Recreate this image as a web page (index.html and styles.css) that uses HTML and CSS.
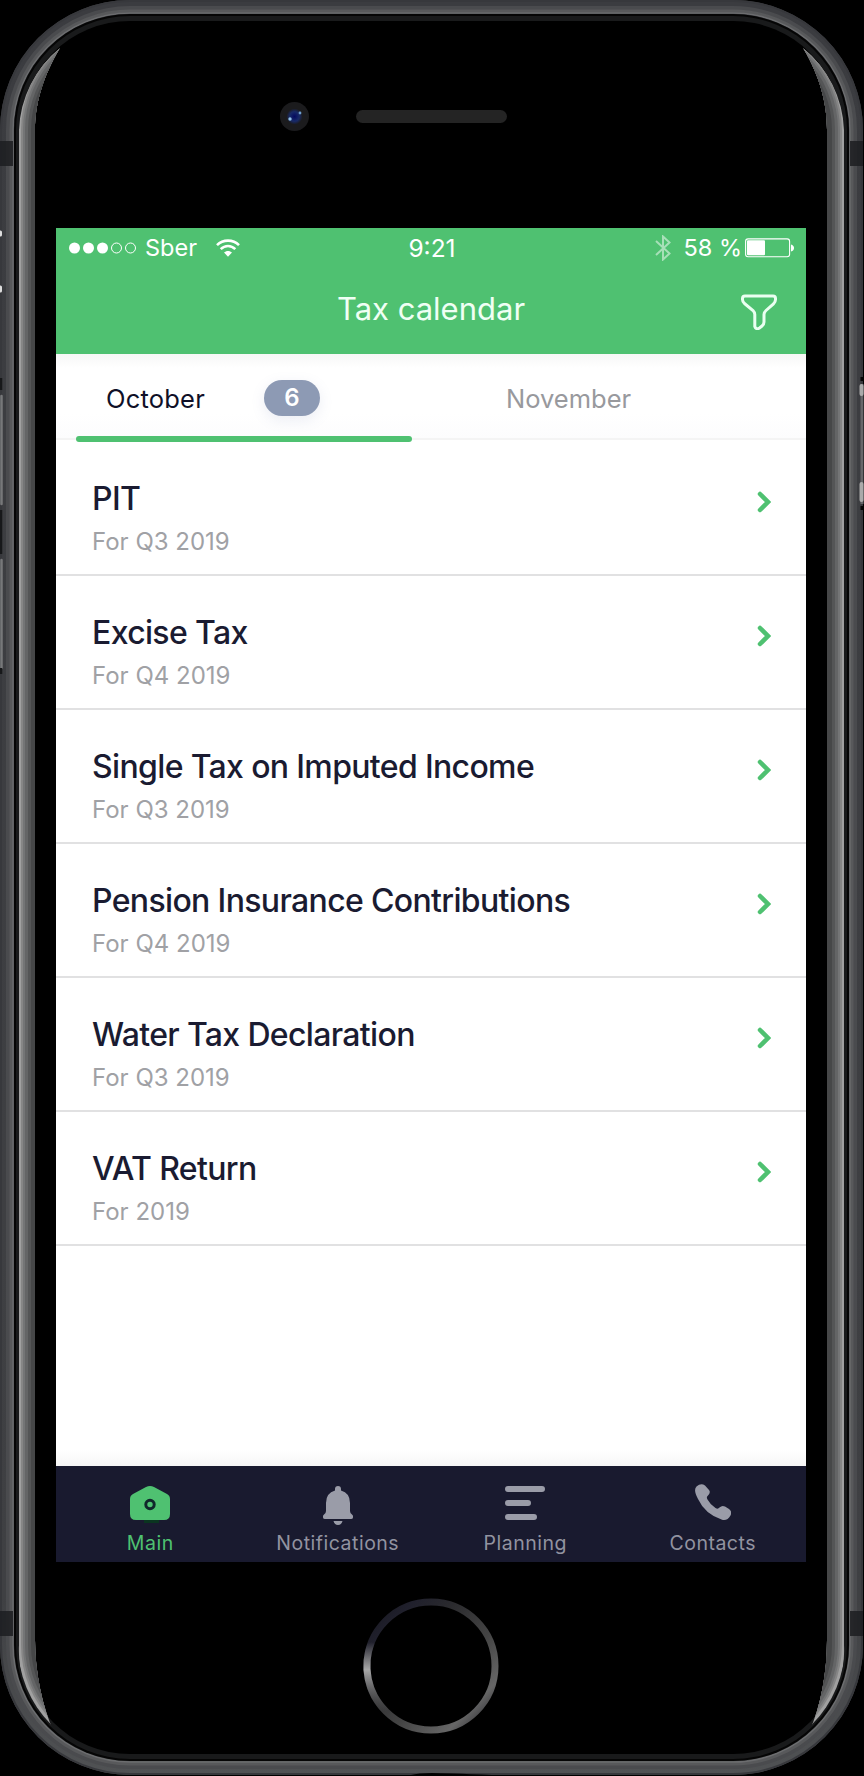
FILE: index.html
```html
<!DOCTYPE html>
<html lang="en">
<head>
<meta charset="utf-8">
<title>Tax calendar</title>
<link rel="stylesheet" href="styles.css">
</head>
<body>
<div class="phone">
  <svg class="frame" viewBox="0 0 864 1776" aria-hidden="true">
    <defs>
      <linearGradient id="rim" x1="0" y1="0" x2="0" y2="1">
        <stop offset="0" stop-color="#3b3c40"/><stop offset=".9" stop-color="#3f4043"/><stop offset="1" stop-color="#505254"/>
      </linearGradient>
      <linearGradient id="ring" x1="0" y1="0" x2="1" y2="1">
        <stop offset="0" stop-color="#15151c"/><stop offset=".18" stop-color="#20202c"/><stop offset=".35" stop-color="#2b2b2e"/><stop offset=".6" stop-color="#444"/><stop offset=".82" stop-color="#666"/><stop offset="1" stop-color="#15151c"/>
      </linearGradient>
      <linearGradient id="glint" x1="0" y1="0" x2="0" y2="1">
        <stop offset="0" stop-color="#a8a8a8" stop-opacity="0"/><stop offset=".4" stop-color="#a8a8a8"/><stop offset="1" stop-color="#777" stop-opacity="0"/>
      </linearGradient>
      <radialGradient id="lens"><stop offset="0" stop-color="#050a60"/><stop offset=".6" stop-color="#182a68"/><stop offset="1" stop-color="#1b1b1d"/></radialGradient>
      <clipPath id="bevel">
        <path d="M19 130A111 111 0 0 1 60 48C42 78 35 105 35 130V1640C35 1672 42 1706 54 1732A111 111 0 0 1 19 1645ZM844 130A111 111 0 0 0 803 48C821 78 827 105 827 130V1640C827 1672 821 1706 809 1732A111 111 0 0 0 844 1645Z"/>
      </clipPath>
    </defs>
    <rect width="863" height="1775" rx="130" fill="url(#rim)"/>
    <g fill="none">
      <rect x="1" y="1" width="861" height="1773" rx="129" stroke="#37383c" stroke-width="2"/>
      <rect x="8" y="8" width="847" height="1759" rx="122" stroke="#4a4b4e" stroke-width="4"/>
      <rect x="11" y="11" width="841" height="1753" rx="119" stroke="#58595b" stroke-width="3"/>
      <rect x="13" y="13" width="837" height="1749" rx="117" stroke="#6c6d6f" stroke-width="1.6"/>
    </g>
    <rect x="14" y="14" width="835" height="1747" rx="116" fill="#050505"/>
    <rect x="16" y="16" width="831" height="1743" rx="114" fill="#191a1b"/>
    <rect x="21" y="21" width="821" height="1733" rx="109"/>
    <g clip-path="url(#bevel)">
      <rect x="18" y="18" width="827" height="1739" rx="112" fill="#a0a0a0"/>
      <rect x="21" y="21" width="821" height="1733" rx="109" fill="#868686"/>
      <rect x="23" y="23" width="817" height="1729" rx="107" fill="#747576"/>
      <rect x="25" y="25" width="813" height="1725" rx="105" fill="#646566"/>
      <rect x="28" y="28" width="807" height="1719" rx="102" fill="#545556"/>
      <rect x="31" y="31" width="801" height="1713" rx="99" fill="#464748"/>
    </g>
    <path d="M0 141H13V166H0ZM850 141H863V166H850ZM0 1611H13V1636H0ZM850 1611H863V1636H850Z" fill="#1c1d21" opacity=".85"/>
    <path d="M1.500 396V504M1.500 560V668" stroke="#77787a" stroke-width="2.500" stroke-linecap="round"/>
    <path d="M.5 232V235M.5 287V291" stroke="#ddd" stroke-width="3" stroke-linecap="round"/>
    <path d="M1 378V390M1 510V554M1 668V674" stroke="#17181a" stroke-width="2.500"/>
    <path d="M862 384V504" stroke="#66676a" stroke-width="3"/>
    <path d="M861.500 386V394M861.500 484V500" stroke="#aaa" stroke-width="4" stroke-linecap="round"/>
    <path d="M862 377V381M862 506V510" stroke="#050505" stroke-width="3"/>
    <path d="M411 1775Q418 1773 432 1773T492 1775Z"/>
    <circle cx="294.500" cy="116.500" r="14.500" fill="#1b1b1d"/>
    <circle cx="294.500" cy="116.500" r="8" fill="url(#lens)"/>
    <circle cx="290" cy="119" r="1.700" fill="#8fc0e8"/><circle cx="300" cy="113" r="1.400" fill="#6f9fd0"/>
    <rect x="356" y="110" width="151" height="13" rx="6.500" fill="#242424"/>
    <circle cx="431" cy="1666" r="64" fill="none" stroke="url(#ring)" stroke-width="7"/>
    <path d="M371.500 1642A64 64 0 0 0 386 1711.500" fill="none" stroke="url(#glint)" stroke-width="7"/>
  </svg>

  <div class="screen">
    <header class="header">
      <div class="status">
        <div class="carrier">
          <svg width="68" height="12" viewBox="0 0 68 12"><g fill="#fff"><circle cx="5.500" cy="6" r="5.500"/><circle cx="19.500" cy="6" r="5.500"/><circle cx="33.500" cy="6" r="5.500"/></g><g fill="none" stroke="#fff"><circle cx="47.500" cy="6" r="5"/><circle cx="61.500" cy="6" r="5"/></g></svg>
          <span class="operator">Sber</span>
          <svg class="wifi" width="24" height="18" viewBox="0 0 24 18"><g fill="none" stroke="#fff" stroke-width="2.600"><path d="M1 6.200C7 .1 17 .1 23 6.200"/><path d="M4.700 10.100C9 5.900 15 5.900 19.300 10.100"/></g><path d="M8 13.500C10.200 11.400 13.800 11.400 16 13.500L12 17.700Z" fill="#fff"/></svg>
        </div>
        <span class="clock">9:21</span>
        <div class="power">
          <svg width="16" height="26" viewBox="0 0 16 26"><path d="M1 6L14.500 18.500L8 24.500V1.500L14.500 7.500L1 20" fill="none" stroke="#fff" stroke-width="2" opacity=".5"/></svg>
          <span class="percent">58 %</span>
          <svg width="50" height="20" viewBox="0 0 50 20"><rect x=".6" y=".9" width="44" height="17.800" rx="2.500" fill="none" stroke="#fff" stroke-width="1.100"/><rect x="2" y="2.300" width="18" height="15" rx="1" fill="#fff"/><path d="M46 6.500Q49 7.500 49 10T46 13.500Z" fill="#fff"/></svg>
        </div>
      </div>
      <div class="titlebar">
        <h1 class="title">Tax calendar</h1>
        <svg class="filter" width="36" height="36" viewBox="0 0 36 36"><path d="M4 2H32Q34.500 2 34.500 4.500V5.500Q34.500 8 32.500 9.800L25 16.500Q23 18.300 23 20.500V28Q23 30.500 21 32L18.500 34Q15 36 13.800 32.500V20.500Q13.800 18.300 12 16.500L3.500 9.500Q1.500 8 1.500 5.500V4.500Q1.500 2 4 2Z" fill="none" stroke="#eafff1" stroke-width="3"/></svg>
      </div>
    </header>
    <nav class="tabs">
      <div class="tab tab-active"><span class="month">October</span><span class="badge">6</span></div>
      <div class="tab"><span class="next-month">November</span></div>
    </nav>
    <main class="list">
      <div class="row"><div><div class="name">PIT</div><div class="period">For Q3 2019</div></div><svg class="chevron" viewBox="0 0 14 22"><path d="M3 3L11 11L3 19"/></svg></div>
      <div class="row"><div><div class="name">Excise Tax</div><div class="period">For Q4 2019</div></div><svg class="chevron" viewBox="0 0 14 22"><path d="M3 3L11 11L3 19"/></svg></div>
      <div class="row"><div><div class="name">Single Tax on Imputed Income</div><div class="period">For Q3 2019</div></div><svg class="chevron" viewBox="0 0 14 22"><path d="M3 3L11 11L3 19"/></svg></div>
      <div class="row"><div><div class="name">Pension Insurance Contributions</div><div class="period">For Q4 2019</div></div><svg class="chevron" viewBox="0 0 14 22"><path d="M3 3L11 11L3 19"/></svg></div>
      <div class="row"><div><div class="name">Water Tax Declaration</div><div class="period">For Q3 2019</div></div><svg class="chevron" viewBox="0 0 14 22"><path d="M3 3L11 11L3 19"/></svg></div>
      <div class="row"><div><div class="name">VAT Return</div><div class="period">For 2019</div></div><svg class="chevron" viewBox="0 0 14 22"><path d="M3 3L11 11L3 19"/></svg></div>
    </main>
    <footer class="tabbar">
      <div class="item item-active">
        <svg width="40" height="42" viewBox="0 0 40 42"><rect x="14" y="34" width="15" height="5" fill="#0a3520"/><path d="M3 10L16 3Q20 1 24 3L37 10Q40 11.500 40 15V30Q40 36 34 36H6Q0 36 0 30V15Q0 11.500 3 10Z" fill="#4fc171"/><circle cx="20" cy="20.500" r="4.200" fill="none" stroke="#10262b" stroke-width="3"/></svg>
        <span>Main</span>
      </div>
      <div class="item">
        <svg width="32" height="42" viewBox="0 0 32 42"><path d="M13 5Q13 2 16 2T19 5V6.500Q28 9 28 19V27Q28 29 30 30.500Q31.500 31.500 31 33.500Q30.800 35 29 35H3Q1.200 35 1 33.500Q.5 31.500 2 30.500Q4 29 4 27V19Q4 9 13 6.500ZM11.500 37H20.500Q19.500 41 16 41T11.500 37Z" fill="#9a9ca8"/></svg>
        <span>Notifications</span>
      </div>
      <div class="item">
        <svg width="40" height="42" viewBox="0 0 40 42"><path d="M3 5H37M3 19H23M3 33H29" stroke="#9a9ca8" stroke-width="6" stroke-linecap="round"/></svg>
        <span>Planning</span>
      </div>
      <div class="item">
        <svg width="36" height="42" viewBox="0 0 36 42"><path d="M1.500 2.500Q6-1.500 10 1.500L14 6Q16 8.500 13 11.500Q11 13 12.500 15.500Q15.500 21 20.500 24Q23 25.500 24.500 23.500Q27 21 30 22.500L34 25Q37.500 27.500 35.500 31.500Q32 37.500 26.500 35.500Q10 30 3 15Q-2 6 1.500 2.500Z" fill="#9a9ca8"/></svg>
        <span>Contacts</span>
      </div>
    </footer>
  </div>
</div>
</body>
</html>
```
FILE: styles.css
```css
* { box-sizing: border-box; }
body { margin: 0; background: #000; font-family: Inter, "Liberation Sans", sans-serif; }
svg { display: block; flex: none; }
.phone { position: relative; width: 864px; height: 1776px; padding: 228px 58px 214px 56px; overflow: hidden; }
.frame { position: absolute; left: 0; top: 0; width: 864px; height: 1776px; }
.screen { position: relative; width: 750px; height: 1334px; background: #fff; display: flex; flex-direction: column; }
.header { height: 126px; background: #4fc171; color: #fff; }
.status { display: grid; grid-template-columns: 1fr auto 1fr; align-items: center; height: 38px; padding: 0 11px 0 13px; font-size: 23.500px; line-height: 40px; }
.carrier, .power { display: flex; align-items: center; }
.operator { margin-left: 8px; }
.wifi { margin-left: 19px; }
.clock { font-size: 24.500px; }
.power { justify-content: flex-end; }
.percent { margin: 0 3px 0 12px; }
.titlebar { display: grid; grid-template-columns: 1fr auto 1fr; align-items: center; height: 88px; padding: 0 29px 2px; }
.title { grid-column: 2; margin: 0; font-size: 31px; font-weight: 400; line-height: 40px; color: #effff4; }
.filter { justify-self: end; margin-top: 6px; }
.tabs { display: flex; height: 88px; padding: 0 20px; background: linear-gradient(#f7f7f6, #fff 14px, #fff 60px, #fcfcfd 84px, #f4f4f4 84px, #f4f4f4 86px, #fff 86px); }
.tab { position: relative; width: 336px; height: 88px; padding: 26px 0 0 30px; display: flex; align-items: flex-start; font-size: 25.500px; line-height: 38px; }
.tab-active::after { content: ""; position: absolute; left: 0; bottom: 0; width: 336px; height: 6px; border-radius: 3px; background: #4fc171; }
.month { width: 158px; color: #0f1028; letter-spacing: .2px; }
.next-month { margin-left: 64px; color: #98999d; }
.badge { width: 56px; height: 36px; border-radius: 18px; background: #8d9ab4; color: #fff; font-size: 24px; font-weight: 600; line-height: 36px; text-align: center; box-shadow: 0 4px 14px rgba(110, 130, 180, .14); }
.list { flex: 1; background: linear-gradient(to top, #f6f6f6, #fff 16px); }
.row { display: flex; justify-content: space-between; height: 134px; padding: 36px 35px 0 36px; border-bottom: 2px solid #e1e1e2; }
.name { font-size: 32px; font-weight: 500; line-height: 42px; letter-spacing: -.65px; color: #1a1b31; }
.period { margin-top: 2px; font-size: 24px; line-height: 40px; color: #a0a1a5; }
.chevron { width: 14px; height: 22px; margin-top: 13px; fill: none; stroke: #4fc171; stroke-width: 4.500; stroke-linecap: round; }
.tabbar { height: 96px; display: grid; grid-template-columns: repeat(4, 1fr); background: #191a2f; color: #9293a0; font-size: 19.500px; line-height: 24px; letter-spacing: .5px; }
.item { display: flex; flex-direction: column; align-items: center; padding: 18px 0 0 1px; gap: 5px; }
.item-active { color: #4fc171; }
```
